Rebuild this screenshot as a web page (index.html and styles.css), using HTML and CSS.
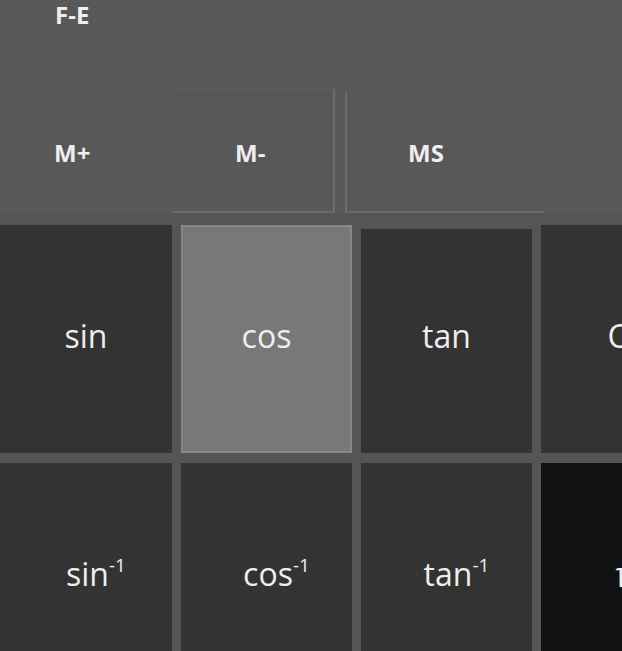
FILE: index.html
```html
<!DOCTYPE html>
<html lang="en">
<head>
  <meta charset="UTF-8" />
  <meta name="viewport" content="width=device-width, initial-scale=1.0" />
  <title>Calculator</title>
  <link rel="stylesheet" href="styles.css">
</head>
<body>

  <div class="calc">
    <div class="panel">
      <div class="fe">F-E</div>
      <div class="memory">
        <div class="mem-btn plain">M+</div>
        <div class="mem-btn framed">M-</div>
        <div class="mem-btn framed-open">MS</div>
      </div>
    </div>

    <div class="keys">
      <div class="key">sin</div>
      <div class="key active">cos</div>
      <div class="key pressed">tan</div>
      <div class="key">CE</div>

      <div class="key">sin<sup>-1</sup></div>
      <div class="key">cos<sup>-1</sup></div>
      <div class="key">tan<sup>-1</sup></div>
      <div class="key digit">π</div>
    </div>
  </div>

</body>
</html>
```

FILE: styles.css
```css
* {
  margin: 0;
  padding: 0;
  box-sizing: border-box;
  font-family: 'Open Sans', 'Noto Sans', sans-serif;
}

body {
  background: #555555;
  color: #eeeeee;
  width: 622px;
  height: 651px;
  overflow: hidden;
}

.calc {
  width: 760px;
}

.panel {
  background: #585858;
  height: 213px;
}

.fe {
  font-size: 24px;
  font-weight: 700;
  line-height: 30px;
  padding-left: 55px;
}

.memory {
  display: flex;
  margin-top: 58px;
  margin-left: -9px;
}

.mem-btn {
  height: 125px;
  font-size: 24px;
  font-weight: 700;
  line-height: 24px;
  padding-top: 51px;
  padding-left: 61px;
  border: 2px solid transparent;
}

.mem-btn.plain {
  width: 181px;
}

.mem-btn.framed {
  width: 163px;
  margin-right: 10px;
  border-color: #5b5b5b #6c6c6c #6c6c6c #5b5b5b;
}

.mem-btn.framed-open {
  width: 200px;
  margin-top: 4px;
  height: 121px;
  padding-top: 47px;
  border-color: #5c5c5c transparent #6a6a6a #6c6c6c;
}

.keys {
  display: grid;
  grid-template-columns: 172px 171px 171px 171px;
  grid-auto-rows: 228px;
  column-gap: 9px;
  row-gap: 10px;
  margin-top: 12px;
}

.key {
  background: #333333;
  border: 2px solid transparent;
  font-size: 32px;
  line-height: 40px;
  padding-top: 89px;
  text-align: center;
  white-space: nowrap;
}

.key.active {
  background: #787878;
  border-color: #878787;
}

.key.pressed {
  margin-top: 4px;
  padding-top: 85px;
}

.key.digit {
  background: #121212;
  font-size: 34px;
}

.key sup {
  font-size: 19px;
  line-height: 0;
  vertical-align: 14px;
  margin-right: -20px;
}
```
